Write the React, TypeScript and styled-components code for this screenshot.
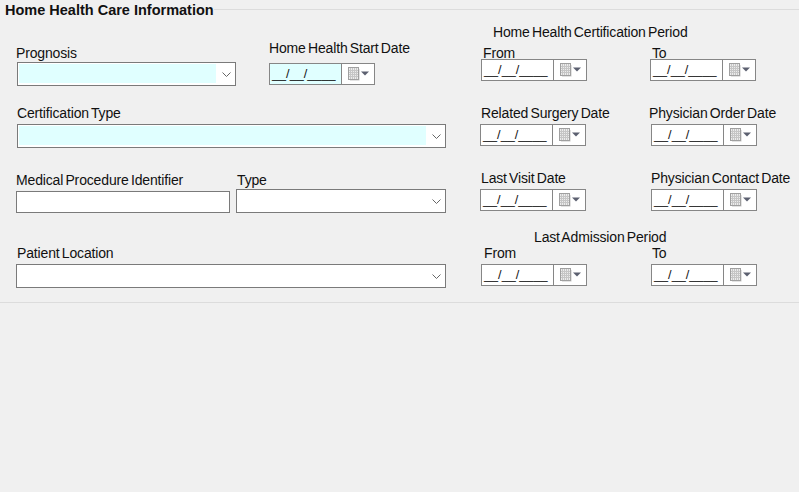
import React from "react";
import styled, { createGlobalStyle } from "styled-components";

const Global = createGlobalStyle`
  html, body {
    margin: 0;
    padding: 0;
    background: #f0f0f0;
  }
`;

const Page = styled.div`
  width: 799px;
  height: 492px;
  overflow: hidden;
  background: #f0f0f0;
  color: #111;
  font-family: "Liberation Sans", Arial, sans-serif;
  font-size: 14px;
  letter-spacing: -0.15px;
  word-spacing: -1.5px;
`;

const Section = styled.section`
  height: 303px;
  box-sizing: border-box;
  border-bottom: 1px solid #dcdcdc;
`;

const Legend = styled.div`
  height: 20px;
  display: flex;
  align-items: flex-start;
  padding-left: 5px;
`;

const LegendTitle = styled.h2`
  margin: 0;
  font-size: 14.5px;
  font-weight: 700;
  line-height: 20px;
  letter-spacing: 0;
  word-spacing: 0;
  color: #111;
`;

const LegendRule = styled.div`
  flex: 1;
  height: 1px;
  margin: 9px 0 0 0;
  background: #dcdcdc;
`;

const Columns = styled.div`
  display: grid;
  grid-template-columns: 446px 319px;
  column-gap: 34px;
`;

const LeftColumn = styled.div`
  display: flex;
  flex-direction: column;
  padding: 20px 0 0 16px;
`;

const RightColumn = styled.div`
  display: flex;
  flex-direction: column;
  padding-top: 4px;
`;

const Row = styled.div<{ $top?: number }>`
  display: flex;
  margin-top: ${(p) => p.$top ?? 0}px;
`;

const DateRow = styled.div<{ $top?: number }>`
  display: grid;
  grid-template-columns: 171px 148px;
  margin-top: ${(p) => p.$top ?? 0}px;
`;

const Field = styled.div<{ $x?: number; $y?: number; $width?: number }>`
  display: flex;
  flex-direction: column;
  align-items: flex-start;
  margin-left: ${(p) => p.$x ?? 0}px;
  margin-top: ${(p) => p.$y ?? 0}px;
  width: ${(p) => (p.$width ? `${p.$width}px` : "auto")};
`;

const Label = styled.label<{ $x?: number; $gap?: number }>`
  display: block;
  height: 16px;
  line-height: 17px;
  white-space: nowrap;
  margin-left: ${(p) => p.$x ?? 0}px;
  margin-bottom: ${(p) => p.$gap ?? 3}px;
`;

const GroupTitle = styled.div<{ $x: number; $top?: number }>`
  height: 16px;
  line-height: 17px;
  margin-left: ${(p) => p.$x}px;
  margin-top: ${(p) => p.$top ?? 0}px;
`;

const Combo = styled.div`
  width: 100%;
  height: 24px;
  box-sizing: border-box;
  display: flex;
  align-items: stretch;
  padding: 1px;
  background: #fff;
  border: 1px solid #7a7a7a;
`;

const ComboValue = styled.div<{ $required?: boolean }>`
  flex: 1;
  margin-bottom: 1px;
  background: ${(p) => (p.$required ? "#e0ffff" : "#fff")};
`;

const ComboArrow = styled.div`
  width: 18px;
  box-sizing: border-box;
  padding-left: 6px;
  display: flex;
  align-items: center;
`;

const TextBox = styled.input`
  display: block;
  width: 100%;
  height: 22px;
  box-sizing: border-box;
  margin: 0;
  padding: 0 3px;
  background: #fff;
  border: 1px solid #7a7a7a;
  border-radius: 0;
  outline: none;
`;

const DateBox = styled.div`
  display: flex;
  width: 106px;
  height: 22px;
  box-sizing: border-box;
  background: #fff;
  border: 1px solid #868686;
`;

const DateMask = styled.div<{ $required?: boolean }>`
  width: 71px;
  box-sizing: border-box;
  padding-left: 2px;
  font-size: 12.7px;
  letter-spacing: 0;
  word-spacing: 0;
  line-height: 21px;
  white-space: nowrap;
  color: #111;
  background: ${(p) => (p.$required ? "#e0ffff" : "#fff")};
`;

const DateButton = styled.div`
  flex: 1;
  display: flex;
  align-items: center;
  padding-left: 6px;
  border-left: 1px solid #868686;
`;

function Chevron() {
  return (
    <svg width="9" height="5" viewBox="0 0 9 5" fill="none">
      <path d="M0.5 0.5 L4.5 4.5 L8.5 0.5" stroke="#666" strokeWidth="1" />
    </svg>
  );
}

function CalendarIcon() {
  return (
    <svg width="23" height="14" viewBox="0 0 23 14" fill="none">
      <path d="M11.5 2 V13.5 H2 V13 H11 V2 Z" fill="#c8c8c8" />
      <rect x="0.5" y="0.5" width="10" height="12" fill="#ececec" stroke="#a0a0a0" />
      <path
        d="M1 3.5 H10 M1 5.5 H10 M1 7.5 H10 M1 9.5 H10 M2.5 1 V12 M4.5 1 V12 M6.5 1 V12 M8.5 1 V12"
        stroke="#c6c6c6"
        strokeWidth="1"
      />
      <path d="M13 4.5 H21 L17 8.5 Z" fill="#5c6070" />
    </svg>
  );
}

function ComboBox({ required }: { required?: boolean }) {
  return (
    <Combo>
      <ComboValue $required={required} />
      <ComboArrow>
        <Chevron />
      </ComboArrow>
    </Combo>
  );
}

function DateInput({ required }: { required?: boolean }) {
  return (
    <DateBox>
      <DateMask $required={required}>__/__/____</DateMask>
      <DateButton>
        <CalendarIcon />
      </DateButton>
    </DateBox>
  );
}

type DateFieldProps = {
  label: string;
  x?: number;
  labelX?: number;
  gap?: number;
};

function DateField({ label, x, labelX, gap }: DateFieldProps) {
  return (
    <Field $x={x}>
      <Label $x={labelX} $gap={gap}>{label}</Label>
      <DateInput />
    </Field>
  );
}

export default function App() {
  return (
    <Page>
      <Global />
      <Section>
        <Legend>
          <LegendTitle>Home Health Care Information</LegendTitle>
          <LegendRule />
        </Legend>
        <Columns>
          <LeftColumn>
            <Row>
              <Field $x={1} $y={5} $width={219}>
                <Label $x={-1} $gap={1}>Prognosis</Label>
                <ComboBox required />
              </Field>
              <Field $x={33}>
                <Label $gap={7}>Home Health Start Date</Label>
                <DateInput required />
              </Field>
            </Row>
            <Row $top={19}>
              <Field $x={1} $width={429}>
                <Label>Certification Type</Label>
                <ComboBox required />
              </Field>
            </Row>
            <Row $top={24}>
              <Field $width={214}>
                <Label>Medical Procedure Identifier</Label>
                <TextBox />
              </Field>
              <Field $x={6} $width={210}>
                <Label $x={1} $gap={1}>Type</Label>
                <ComboBox />
              </Field>
            </Row>
            <Row $top={32}>
              <Field $width={430}>
                <Label $x={1}>Patient Location</Label>
                <ComboBox />
              </Field>
            </Row>
          </LeftColumn>
          <RightColumn>
            <GroupTitle $x={13}>Home Health Certification Period</GroupTitle>
            <DateRow $top={5}>
              <DateField label="From" x={1} labelX={2} gap={-2} />
              <DateField label="To" x={-1} labelX={2} gap={-2} />
            </DateRow>
            <DateRow $top={24}>
              <DateField label="Related Surgery Date" labelX={1} />
              <DateField label="Physician Order Date" labelX={-2} />
            </DateRow>
            <DateRow $top={24}>
              <DateField label="Last Visit Date" labelX={1} />
              <DateField label="Physician Contact Date" />
            </DateRow>
            <GroupTitle $x={54} $top={18}>Last Admission Period</GroupTitle>
            <DateRow>
              <DateField label="From" x={1} labelX={3} />
              <DateField label="To" labelX={1} />
            </DateRow>
          </RightColumn>
        </Columns>
      </Section>
    </Page>
  );
}
